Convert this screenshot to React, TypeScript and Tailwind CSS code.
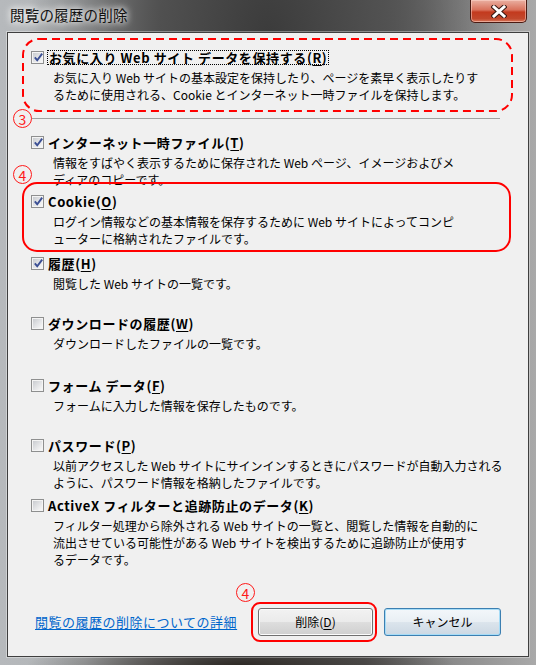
import React from 'react';

type Item = {
  label: string;
  accel: string;
  checked: boolean;
  desc: string[];
  h: string;
};

// 一覧の各項目 (高さは元の画面に合わせて固定)
const items: Item[] = [
  {
    label: 'インターネット一時ファイル',
    accel: 'T',
    checked: true,
    desc: ['情報をすばやく表示するために保存された Web ページ、イメージおよびメ', 'ディアのコピーです。'],
    h: 'h-[59px]',
  },
  {
    label: 'Cookie',
    accel: 'O',
    checked: true,
    desc: ['ログイン情報などの基本情報を保存するために Web サイトによってコンピ', 'ューターに格納されたファイルです。'],
    h: 'h-[62px]',
  },
  { label: '履歴', accel: 'H', checked: true, desc: ['閲覧した Web サイトの一覧です。'], h: 'h-[60px]' },
  {
    label: 'ダウンロードの履歴',
    accel: 'W',
    checked: false,
    desc: ['ダウンロードしたファイルの一覧です。'],
    h: 'h-[62px]',
  },
  { label: 'フォーム データ', accel: 'F', checked: false, desc: ['フォームに入力した情報を保存したものです。'], h: 'h-[60px]' },
  {
    label: 'パスワード',
    accel: 'P',
    checked: false,
    desc: ['以前アクセスした Web サイトにサインインするときにパスワードが自動入力される', 'ように、パスワード情報を格納したファイルです。'],
    h: 'h-[60px]',
  },
  {
    label: 'ActiveX フィルターと追跡防止のデータ',
    accel: 'K',
    checked: false,
    desc: [
      'フィルター処理から除外される Web サイトの一覧と、閲覧した情報を自動的に',
      '流出させている可能性がある Web サイトを検出するために追跡防止が使用す',
      'るデータです。',
    ],
    h: 'h-auto',
  },
];

function CheckBox({ checked }: { checked: boolean }) {
  return (
    <span className="relative block h-[13px] w-[13px] shrink-0 border border-[#8e8f8f] bg-[#f4f4f4] p-[1px]">
      <span className="block h-full w-full bg-[linear-gradient(135deg,#c9ccd0_0%,#e4e5e7_55%,#f8f8f8_100%)]" />
      {checked && (
        <svg className="absolute left-[0px] top-[-1px]" width="13" height="13" viewBox="0 0 13 13">
          <path d="M2.8 6.4 L5.2 9.2 L10.2 2.6" fill="none" stroke="#3b4f94" strokeWidth="1.9" />
        </svg>
      )}
    </span>
  );
}

function Label({ text, accel, focused }: { text: string; accel: string; focused?: boolean }) {
  return (
    <span
      className={
        focused
          ? 'whitespace-nowrap border border-dotted border-black px-[1px] text-[13px] font-bold leading-[13px] tracking-[0.6px] text-black'
          : 'whitespace-nowrap px-[1px] text-[13px] font-bold leading-[13px] tracking-[0.6px] text-black'
      }
    >
      {text}(<span className="underline underline-offset-2">{accel}</span>)
    </span>
  );
}

function Row({ label, accel, checked, desc, focused }: Omit<Item, 'h'> & { focused?: boolean }) {
  return (
    <div className="flex flex-col">
      <div className="flex h-[20px] items-center gap-[3px]">
        <CheckBox checked={checked} />
        <Label text={label} accel={accel} focused={focused} />
      </div>
      <div className="mt-[2px] pl-[22px] text-[12px] leading-[17px] text-black">
        {desc.map((line) => (
          <div key={line} className="whitespace-nowrap">
            {line}
          </div>
        ))}
      </div>
    </div>
  );
}

// 丸数字の注釈
function Circled({ n }: { n: string }) {
  return (
    <span className="flex h-[19px] w-[19px] items-center justify-center rounded-full border border-[#ff1a1a] bg-[#f0f0f0] text-[14px] leading-none text-[#ff1a1a]">
      {n}
    </span>
  );
}

export default function App() {
  return (
    <div className="h-[665px] w-[536px] overflow-hidden font-['Noto_Sans_CJK_JP','Noto_Sans',sans-serif] bg-[radial-gradient(45%_60%_at_50%_6%,#3b3b3b_0%,#505050_45%,rgba(80,80,80,0)_100%),radial-gradient(40%_4%_at_45%_100%,#2e2a26_0%,rgba(46,42,38,0)_100%),linear-gradient(90deg,#b6b9bc_0%,#b1b4b6_16%,#8e8f90_28%,#5f5f5f_45%,#5b5b5b_68%,#8a8a8a_84%,#a9a9a9_100%)]">
      {/* タイトルバー */}
      <div className="flex h-[32px] items-start justify-between">
        <div className="pl-[10px] pt-[5px] text-[14.5px] leading-[20px] tracking-[0.2px] text-[#111] [text-shadow:0_0_6px_#fff,0_0_10px_#fff]">
          閲覧の履歴の削除
        </div>
        <button className="mr-[9px] flex h-[23px] w-[57px] items-center justify-center rounded-b-[5px] border border-t-0 border-[#4a1a12] bg-[linear-gradient(#eab0a2_0%,#d9715b_45%,#c33a1e_55%,#c2482c_85%,#db7a5e_100%)] shadow-[inset_0_0_0_1px_rgba(255,220,210,0.5)]">
          <svg width="16" height="13" viewBox="0 0 16 13">
            <path d="M3 2 L13 11 M13 2 L3 11" stroke="#3a1a14" strokeWidth="5" strokeLinecap="square" />
            <path d="M3 2 L13 11 M13 2 L3 11" stroke="#ffffff" strokeWidth="3" strokeLinecap="square" />
          </svg>
        </button>
      </div>

      {/* クライアント領域 */}
      <div className="relative mx-[7px] flex h-[625px] flex-col border border-[#3f3f3f] bg-[#f0f0f0] pt-[14px] shadow-[0_0_0_1px_rgba(255,255,255,0.35)]">
        <div className="pl-[23px]">
          <Row
            label="お気に入り Web サイト データを保持する"
            accel="R"
            checked
            focused
            desc={['お気に入り Web サイトの基本設定を保持したり、ページを素早く表示したりす', 'るために使用される、Cookie とインターネット一時ファイルを保持します。']}
          />
        </div>

        <div className="ml-[22px] mt-[15px] w-[470px] border-t border-[#a0a0a0]" />

        <div className="mt-[13px] flex flex-col pl-[23px]">
          {items.map((it) => (
            <div key={it.label} className={it.h}>
              <Row label={it.label} accel={it.accel} checked={it.checked} desc={it.desc} />
            </div>
          ))}
        </div>

        {/* 下部ボタン */}
        <div className="mt-auto mb-[20px] flex items-center pl-[27px] pr-[27px]">
          <a href="#" className="text-[13px] leading-[16px] tracking-[0.5px] text-[#0066cc] underline underline-offset-2">
            閲覧の履歴の削除についての詳細
          </a>
          <div className="ml-auto flex gap-[11px]">
            <button className="h-[28px] w-[115px] rounded-[3px] border border-[#707070] bg-[linear-gradient(#f2f2f2_0%,#ebebeb_48%,#dddddd_52%,#cfcfcf_100%)] text-[12px] text-black shadow-[inset_0_0_0_1px_#fcfcfc]">
              削除(<span className="underline underline-offset-2">D</span>)
            </button>
            <button className="h-[28px] w-[117px] rounded-[3px] border border-[#3c7fb1] bg-[linear-gradient(#f3f7fa_0%,#e9eff4_48%,#dbe4ec_52%,#ccd8e3_100%)] text-[12px] text-black shadow-[inset_0_0_0_1px_#a6dcf7]">
              キャンセル
            </button>
          </div>
        </div>

        {/* 注釈 (赤枠・番号) */}
        <svg className="pointer-events-none absolute left-[14px] top-[5px]" width="491" height="74" viewBox="0 0 491 74">
          <rect x="1" y="1" width="489" height="72" rx="16" fill="none" stroke="#ff0000" strokeWidth="2" strokeDasharray="8 5" />
        </svg>
        <div className="pointer-events-none absolute left-[5px] top-[76px]">
          <Circled n="3" />
        </div>
        <div className="pointer-events-none absolute left-[5px] top-[132px]">
          <Circled n="4" />
        </div>
        <div className="pointer-events-none absolute left-[14px] top-[149px] h-[70px] w-[489px] rounded-[15px] border-2 border-[#ff0000]" />
        <div className="pointer-events-none absolute left-[228px] top-[550px]">
          <Circled n="4" />
        </div>
        <div className="pointer-events-none absolute left-[243px] top-[569px] h-[40px] w-[126px] rounded-[9px] border-2 border-[#ff0000]" />
      </div>
    </div>
  );
}
